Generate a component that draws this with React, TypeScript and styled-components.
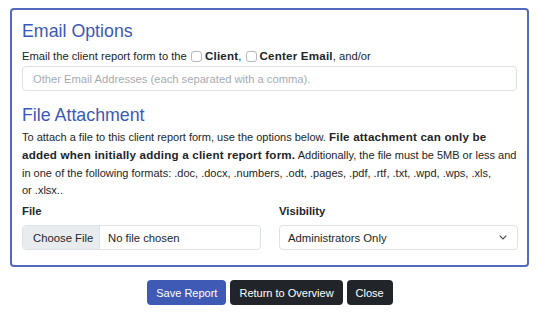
import React from 'react';
import styled, { createGlobalStyle } from 'styled-components';

const GlobalStyle = createGlobalStyle`
  body {
    margin: 0;
    background: #fff;
    font-family: 'Liberation Sans', Arial, sans-serif;
    color: #212529;
  }
  * { box-sizing: border-box; }
`;

const Page = styled.div`
  width: 540px;
  padding: 8px 11px 0 10px;
`;

const Card = styled.div`
  border: 2px solid #5369bd;
  border-radius: 4px;
  padding: 14px 10px 15px 10px;
`;

const Heading = styled.h2<{ $gap: number }>`
  margin: 0 0 ${p => p.$gap}px 0;
  font-size: 17.8px;
  font-weight: 400;
  line-height: 14px;
  color: #3b59b6;
`;

const Line = styled.div`
  font-size: 11.2px;
  line-height: 18px;
  white-space: nowrap;
`;

const Check = styled.span`
  display: inline-block;
  width: 11px;
  height: 11px;
  border: 1px solid #b4b9bf;
  border-radius: 3px;
  background: #fff;
  vertical-align: -2px;
  margin: 0 3px 0 1px;
`;

const Strong = styled.b`
  font-size: 11.6px;
  line-height: 1;
  letter-spacing: 0.2px;
`;

const Input = styled.input`
  display: block;
  width: 100%;
  height: 25px;
  margin: 1px 0 17px 0;
  padding: 0 10px;
  border: 1px solid #dee2e6;
  border-radius: 4px;
  font-family: inherit;
  font-size: 11.2px;
  outline: none;
  &::placeholder { color: #a6abb1; }
`;

const Para = styled.p`
  margin: 0;
  font-size: 11px;
  line-height: 17.8px;
  white-space: nowrap;
`;

const Grid = styled.div`
  display: grid;
  grid-template-columns: 239px 239px;
  column-gap: 18px;
  margin-top: 2px;
`;

const Label = styled.div`
  font-size: 11.3px;
  font-weight: 700;
  line-height: 18px;
  margin-bottom: 5px;
`;

const Control = styled.div`
  height: 25px;
  border: 1px solid #dee2e6;
  border-radius: 4px;
  display: flex;
  align-items: center;
  font-size: 11.3px;
  overflow: hidden;
`;

const FileButton = styled.div`
  width: 77px;
  height: 100%;
  display: flex;
  align-items: center;
  padding-left: 10px;
  background: #e9ecef;
  border-right: 1px solid #dee2e6;
`;

const FileText = styled.span`
  padding-left: 8px;
`;

const SelectText = styled.span`
  flex: 1;
  padding-left: 8px;
`;

const Chevron = styled.svg`
  margin-right: 10px;
`;

const Actions = styled.div`
  display: flex;
  justify-content: center;
  gap: 4px;
  margin-top: 13px;
  padding-left: 1px;
`;

const Button = styled.button<{ $primary?: boolean }>`
  height: 25px;
  padding: 0 9px;
  border: none;
  border-radius: 4px;
  font-family: inherit;
  font-size: 11px;
  color: #fff;
  background: ${p => (p.$primary ? '#3f5ab4' : '#212529')};
`;

export default function App() {
  return (
    <Page>
      <GlobalStyle />
      <Card>
        <Heading $gap={9}>Email Options</Heading>
        <Line>
          Email the client report form to the <Check /><Strong>Client</Strong>, <Check />
          <Strong>Center Email</Strong>, and/or
        </Line>
        <Input placeholder="Other Email Addresses (each separated with a comma)." />
        <Heading $gap={7}>File Attachment</Heading>
        <Para>
          To attach a file to this client report form, use the options below.{' '}
          <Strong>File attachment can only be</Strong>
          <br />
          <Strong>added when initially adding a client report form.</Strong> Additionally, the file must be
          5MB or less and
          <br />
          in one of the following formats: .doc, .docx, .numbers, .odt, .pages, .pdf, .rtf, .txt, .wpd, .wps, .xls,
          <br />
          or .xlsx..
        </Para>
        <Grid>
          <div>
            <Label>File</Label>
            <Control>
              <FileButton>Choose File</FileButton>
              <FileText>No file chosen</FileText>
            </Control>
          </div>
          <div>
            <Label>Visibility</Label>
            <Control>
              <SelectText>Administrators Only</SelectText>
              <Chevron width="8" height="5" viewBox="0 0 8 5">
                <path d="M0.7 0.7L4 4L7.3 0.7" fill="none" stroke="#495057" strokeWidth="1.2" />
              </Chevron>
            </Control>
          </div>
        </Grid>
      </Card>
      <Actions>
        <Button $primary>Save Report</Button>
        <Button>Return to Overview</Button>
        <Button>Close</Button>
      </Actions>
    </Page>
  );
}
